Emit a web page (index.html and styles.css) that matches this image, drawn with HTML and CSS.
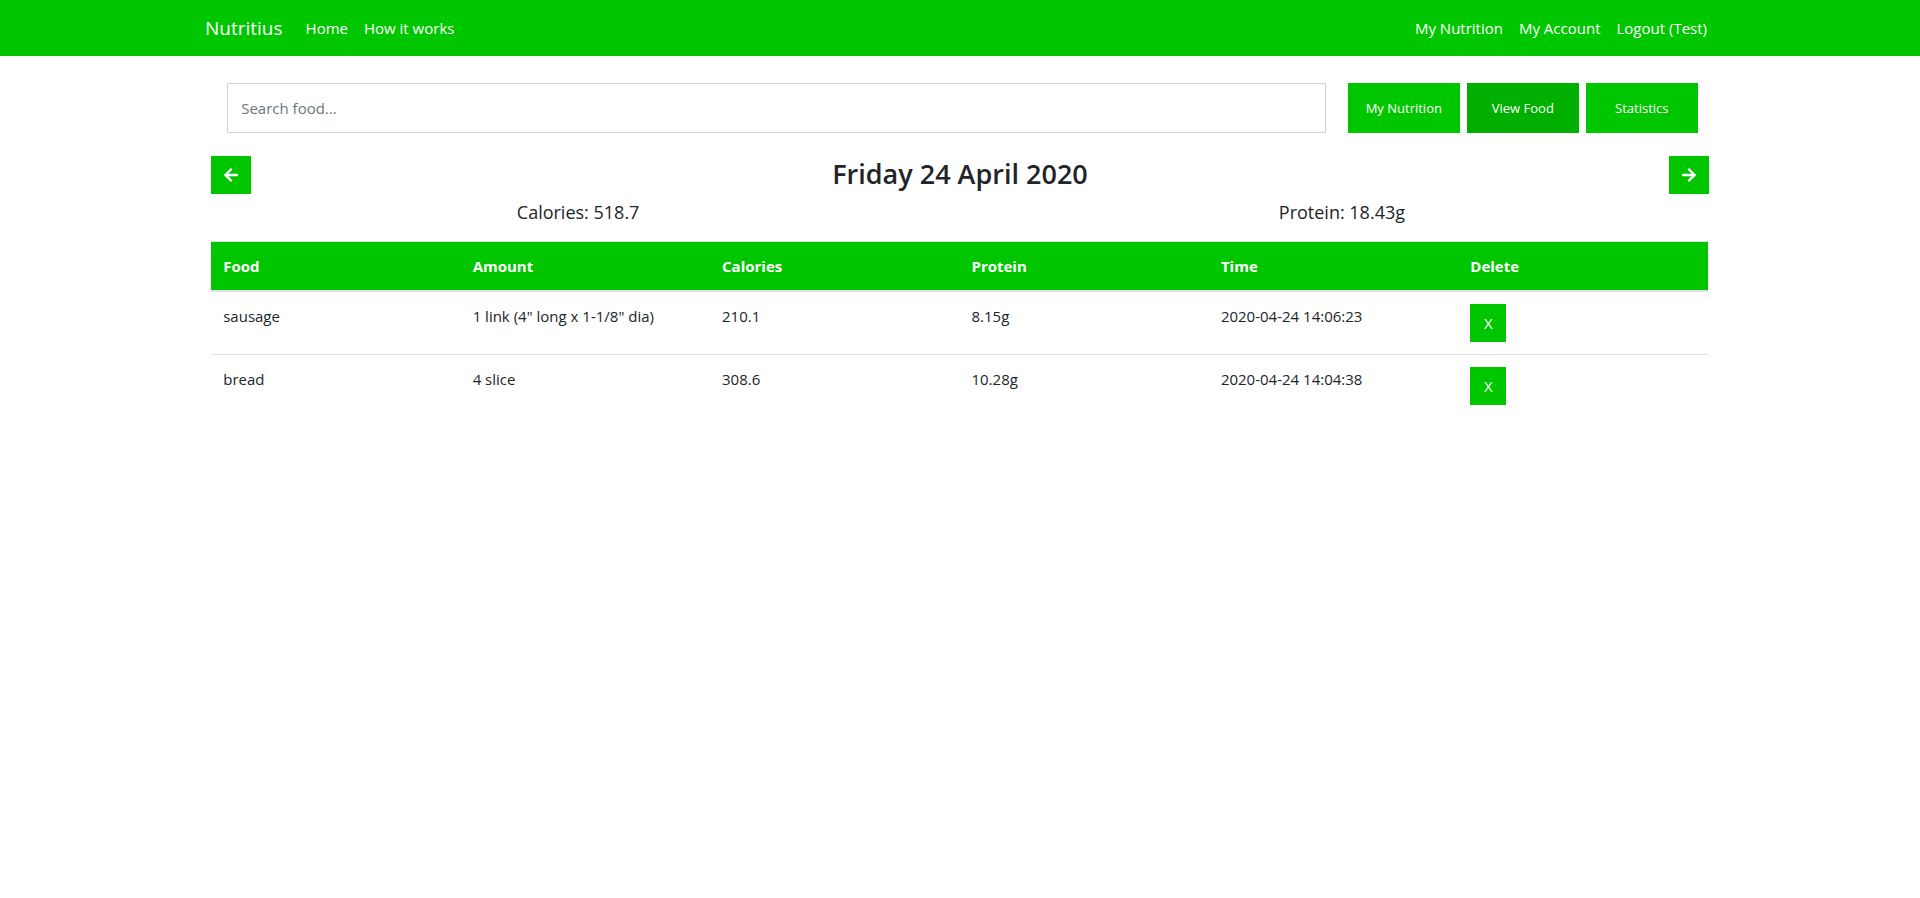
FILE: index.html
```html
<!DOCTYPE html>
<html lang="en">
<head>
<meta charset="utf-8">
<title>Nutritius - View Food</title>
<link rel="stylesheet" href="styles.css">
</head>
<body>
<nav class="navbar">
  <a class="brand" href="#">Nutritius</a>
  <div class="nav-group">
    <a class="nav-link" href="#">Home</a>
    <a class="nav-link" href="#">How it works</a>
  </div>
  <div class="nav-group nav-end">
    <a class="nav-link" href="#">My Nutrition</a>
    <a class="nav-link" href="#">My Account</a>
    <a class="nav-link" href="#">Logout (Test)</a>
  </div>
</nav>
<main class="content">
  <div class="toolbar">
    <input class="search" type="text" placeholder="Search food..." aria-label="Search food">
    <div class="tabs">
      <button class="btn tab" type="button">My Nutrition</button>
      <button class="btn tab active" type="button">View Food</button>
      <button class="btn tab" type="button">Statistics</button>
    </div>
  </div>
  <div class="date-row">
    <button class="btn arrow" type="button" aria-label="Previous day">
      <svg class="icon" viewBox="0 0 448 512" aria-hidden="true"><path fill="currentColor" d="M257.500 445.100l-22.200 22.200c-9.400 9.400-24.600 9.400-33.900 0L7 273c-9.400-9.400-9.400-24.600 0-33.900L201.400 44.700c9.400-9.400 24.600-9.400 33.900 0l22.200 22.200c9.500 9.500 9.300 25-.4 34.300L136.600 216H424c13.300 0 24 10.700 24 24v32c0 13.300-10.700 24-24 24H136.600l120.500 114.800c9.800 9.300 10 24.800.4 34.300z"/></svg>
    </button>
    <h1 class="date">Friday 24 April 2020</h1>
    <button class="btn arrow" type="button" aria-label="Next day">
      <svg class="icon" viewBox="0 0 448 512" aria-hidden="true"><path fill="currentColor" transform="matrix(-1 0 0 1 448 0)" d="M257.500 445.100l-22.200 22.200c-9.400 9.400-24.600 9.400-33.900 0L7 273c-9.400-9.400-9.400-24.600 0-33.900L201.400 44.700c9.400-9.400 24.600-9.400 33.900 0l22.200 22.200c9.500 9.500 9.300 25-.4 34.300L136.600 216H424c13.300 0 24 10.700 24 24v32c0 13.300-10.700 24-24 24H136.600l120.500 114.800c9.800 9.300 10 24.800.4 34.300z"/></svg>
    </button>
  </div>
  <div class="totals">
    <p class="total">Calories: 518.7</p>
    <p class="total">Protein: 18.43g</p>
  </div>
  <table class="table">
    <thead>
      <tr><th>Food</th><th>Amount</th><th>Calories</th><th>Protein</th><th>Time</th><th>Delete</th></tr>
    </thead>
    <tbody>
      <tr><td>sausage</td><td>1 link (4" long x 1-1/8" dia)</td><td>210.1</td><td>8.15g</td><td>2020-04-24 14:06:23</td><td><button class="btn delete" type="button" aria-label="X, delete sausage">X</button></td></tr>
      <tr><td>bread</td><td>4 slice</td><td>308.6</td><td>10.28g</td><td>2020-04-24 14:04:38</td><td><button class="btn delete" type="button" aria-label="X, delete bread">X</button></td></tr>
    </tbody>
  </table>
</main>
</body>
</html>
```
FILE: styles.css
```css
* { box-sizing: border-box; }

body {
  margin: 0;
  background: #fff;
  color: #212529;
  font-family: "Segoe UI", "Open Sans", sans-serif;
  font-size: 15px;
  line-height: 24px;
}

.navbar {
  display: flex;
  align-items: center;
  padding: 8px calc(10% + 13px);
  background: #00c600;
}
.navbar a { color: #fff; text-decoration: none; }
.brand { margin-right: 15px; font-size: 19px; line-height: 40px; }
.nav-group { display: flex; }
.nav-end { margin-left: auto; }
.nav-link { padding: 8px; }

.content { width: 78%; margin: 0 auto; }

.toolbar {
  display: flex;
  gap: 22px;
  padding: 27px 11px 0 16px;
}
.search {
  flex: 1;
  min-width: 0;
  height: 50px;
  padding: 6px 13px;
  border: 1px solid #ced4da;
  border-radius: 0;
  color: #495057;
  font: inherit;
}
.search::placeholder { color: #6c757d; opacity: 1; }
.tabs { display: flex; gap: 7px; }

.btn {
  padding: 0;
  border: 0;
  background: #00c600;
  color: #fff;
  font: inherit;
  cursor: pointer;
}
.tab { width: 112px; font-size: 13px; }
.tab.active { background: #00af00; }

.date-row {
  display: flex;
  justify-content: space-between;
  margin-top: 23px;
}
.arrow {
  display: flex;
  align-items: center;
  justify-content: center;
  width: 40px;
  height: 38px;
}
.icon { width: 14px; height: 16px; }
.date { margin: 0; font-size: 27px; font-weight: 600; line-height: 36px; }

.totals { display: flex; margin: 4px -15px 14px; }
.total {
  flex: 1;
  margin: 0;
  font-size: 18px;
  line-height: 29px;
  text-align: center;
}

.table {
  width: calc(100% - 1px);
  table-layout: fixed;
  border-spacing: 0;
}
.table th, .table td { padding: 12px; text-align: left; vertical-align: top; }
.table th {
  border-top: 1px solid #dee2e6;
  border-bottom: 2px solid #dee2e6;
  background: #00c600;
  color: #fff;
  font-weight: 700;
}
.table tr + tr td { border-top: 1px solid #dee2e6; }
.delete { display: block; width: 36px; height: 38px; }
```
